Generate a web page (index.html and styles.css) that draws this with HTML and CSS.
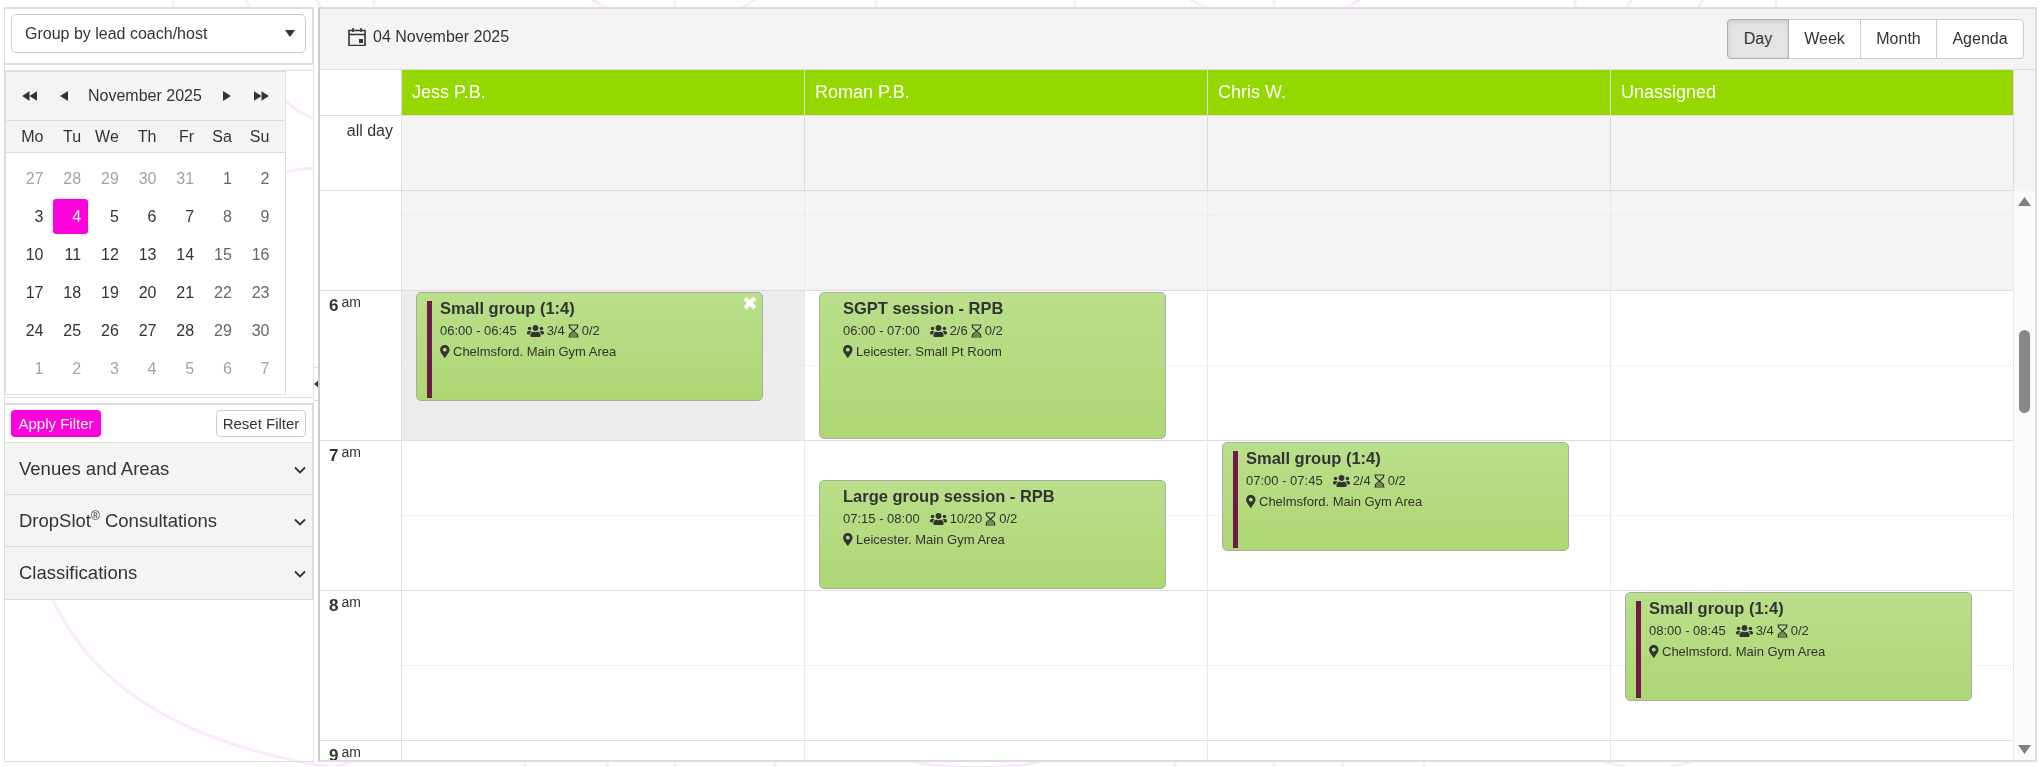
FILE: index.html
```html
<!doctype html>
<html lang="en">

<head>
  <meta charset="utf-8">
  <meta name="viewport" content="width=device-width, initial-scale=1">
  <link rel="stylesheet" href="styles.css">
  <title>Schedule</title>
</head>

<body>
  <!-- faint background pattern, only seen through the gaps -->
  <svg class="pattern" viewBox="0 0 2043 767" aria-hidden="true">
    <path d="M173 0V8M374 0V8M675 0V8M876 0V8M1075 0V8M1274 0V8M1575 0V8M1776 0V8" />
    <path d="M246 0L250 8M316 0L322 8M592 0L608 8M755 0L742 8M1190 0L1208 8M1360 0L1344 8M1632 0L1626 8M1703 0L1698 8" />
    <path d="M525 760V767M675 760V767M775 760V767M1175 760V767M1274 760V767M1424 760V767M606 760L608 767M1344 760L1342 767" />
    <path d="M53 600C95 690 190 745 330 767M335 767L352 761M912 761C950 770 1005 770 1042 761M1603 761L1625 767M1694 761L1670 767" />
    <path d="M285 100C295 110 303 115 313 118M285 172C295 170 303 169 313 168" />
  </svg>

  <svg class="sprites" aria-hidden="true">
    <symbol id="i-users" viewBox="0 0 640 512">
      <path d="M96 224c35.300 0 64-28.700 64-64s-28.700-64-64-64-64 28.700-64 64 28.700 64 64 64zm448 0c35.300 0 64-28.700 64-64s-28.700-64-64-64-64 28.700-64 64 28.700 64 64 64zm32 32h-64c-17.600 0-33.500 7.100-45.100 18.600 40.300 22.100 68.900 62 75.100 109.400h66c17.700 0 32-14.300 32-32v-32c0-35.300-28.700-64-64-64zm-256 0c61.900 0 112-50.100 112-112S381.900 32 320 32 208 82.100 208 144s50.100 112 112 112zm76.800 32h-8.300c-20.800 10-43.900 16-68.500 16s-47.600-6-68.500-16h-8.300C179.600 288 128 339.600 128 403.200V432c0 26.500 21.500 48 48 48h288c26.500 0 48-21.500 48-48v-28.800c0-63.600-51.600-115.200-115.200-115.200zm-223.700-13.400C161.500 263.100 145.600 256 128 256H64c-35.300 0-64 28.700-64 64v32c0 17.700 14.300 32 32 32h65.900c6.300-47.400 34.900-87.300 75.200-109.400z" />
    </symbol>
    <symbol id="i-pin" viewBox="0 0 384 512">
      <path d="M172.268 501.670C26.970 291.031 0 262.774 0 184 0 82.381 82.381 0 184 0s184 82.381 184 184c0 78.774-26.970 107.031-172.268 317.670-8.786 12.690-28.678 12.688-37.464 0zM184 260c41.974 0 76-34.026 76-76s-34.026-76-76-76-76 34.026-76 76 34.026 76 76 76z" />
    </symbol>
    <symbol id="i-hourglass" viewBox="0 0 11 14">
      <path d="M.5 1h10M.5 13h10M1.500 1v2.500L5.500 7l4-3.500V1M1.500 13v-2.500L5.500 7l4 3.500V13" fill="none" stroke="currentColor" stroke-width="1.200" />
      <path d="M2 12.500V10.800L5.500 7.800l3.500 3v1.700z" fill="#6f8a55" />
    </symbol>
    <symbol id="i-chevron" viewBox="0 0 12 8">
      <path d="M1 1.500l5 5 5-5" fill="none" stroke="currentColor" stroke-width="1.800" />
    </symbol>
  </svg>

  <div class="app">
    <aside class="sidebar">
      <div class="panel group-panel">
        <div class="select">
          <span>Group by lead coach/host</span>
          <svg class="caret" viewBox="0 0 10 7"><path d="M0 0h10L5 7z" /></svg>
        </div>
      </div>

      <div class="panel cal-panel">
        <div class="cal">
          <div class="cal-head">
            <svg class="nav nav-double" viewBox="0 0 16 10"><path d="M8 0v10L0 5zM16 0v10L8 5z" /></svg>
            <svg class="nav nav-single" viewBox="0 0 8 10"><path d="M8 0v10L0 5z" /></svg>
            <span class="cal-title">November 2025</span>
            <svg class="nav nav-single" viewBox="0 0 8 10"><path d="M0 0v10l8-5z" /></svg>
            <svg class="nav nav-double" viewBox="0 0 16 10"><path d="M0 0v10l8-5zM8 0v10l8-5z" /></svg>
          </div>
          <div class="cal-grid cal-weekdays">
            <span>Mo</span><span>Tu</span><span>We</span><span>Th</span><span>Fr</span><span>Sa</span><span>Su</span>
          </div>
          <div class="cal-grid cal-days">
            <span class="off">27</span><span class="off">28</span><span class="off">29</span><span class="off">30</span><span class="off">31</span><span class="we">1</span><span class="we">2</span>
            <span>3</span><span class="sel">4</span><span>5</span><span>6</span><span>7</span><span class="we">8</span><span class="we">9</span>
            <span>10</span><span>11</span><span>12</span><span>13</span><span>14</span><span class="we">15</span><span class="we">16</span>
            <span>17</span><span>18</span><span>19</span><span>20</span><span>21</span><span class="we">22</span><span class="we">23</span>
            <span>24</span><span>25</span><span>26</span><span>27</span><span>28</span><span class="we">29</span><span class="we">30</span>
            <span class="off">1</span><span class="off">2</span><span class="off">3</span><span class="off">4</span><span class="off">5</span><span class="off">6</span><span class="off">7</span>
          </div>
        </div>
      </div>

      <div class="panel filter-panel">
        <div class="filter-actions">
          <button class="btn-apply">Apply Filter</button>
          <button class="btn-reset">Reset Filter</button>
        </div>
        <div class="acc-row">
          <span>Venues and Areas</span>
          <svg class="chevron"><use href="#i-chevron" /></svg>
        </div>
        <div class="acc-row">
          <span>DropSlot<sup>®</sup> Consultations</span>
          <svg class="chevron"><use href="#i-chevron" /></svg>
        </div>
        <div class="acc-row">
          <span>Classifications</span>
          <svg class="chevron"><use href="#i-chevron" /></svg>
        </div>
      </div>
    </aside>

    <div class="splitter">
      <div class="splitter-toggle"><svg viewBox="0 0 6 10"><path d="M6 0v10L0 5z" /></svg></div>
    </div>

    <main class="sched">
      <div class="toolbar">
        <div class="toolbar-date">
          <svg class="date-icon" viewBox="0 0 18 19">
            <path d="M1 3.500h16v15H1zM1 7.500h16M5 1v4M13 1v4" fill="none" stroke="#333" stroke-width="1.600" />
            <path d="M11 12h4v4h-4z" fill="#333" />
          </svg>
          <span>04 November 2025</span>
        </div>
        <div class="views">
          <button class="active">Day</button><button>Week</button><button>Month</button><button>Agenda</button>
        </div>
      </div>

      <div class="head-row">
        <div class="axis-cell"></div>
        <div class="head-cell">Jess P.B.</div>
        <div class="head-cell">Roman P.B.</div>
        <div class="head-cell">Chris W.</div>
        <div class="head-cell">Unassigned</div>
      </div>

      <div class="allday-row">
        <div class="axis-cell">all day</div>
        <div class="allday-cell"></div>
        <div class="allday-cell"></div>
        <div class="allday-cell"></div>
        <div class="allday-cell"></div>
      </div>

      <div class="body">
        <div class="axis">
          <div class="hour hour-early"></div>
          <div class="hour"><b>6</b><span>am</span></div>
          <div class="hour"><b>7</b><span>am</span></div>
          <div class="hour"><b>8</b><span>am</span></div>
          <div class="hour"><b>9</b><span>am</span></div>
        </div>

        <div class="col">
          <div class="slot slot-first closed"></div><div class="slot slot-end closed"></div>
          <div class="slot now"></div><div class="slot slot-end now"></div>
          <div class="slot"></div><div class="slot slot-end"></div>
          <div class="slot"></div><div class="slot slot-end"></div>
          <div class="event marked" style="top: 101px; height: 109px">
            <span class="event-close">✖</span>
            <div class="event-title">Small group (1:4)</div>
            <div class="event-line">06:00 - 06:45 <svg class="ic-users"><use href="#i-users" /></svg> 3/4 <svg class="ic-glass"><use href="#i-hourglass" /></svg> 0/2</div>
            <div class="event-line"><svg class="ic-pin"><use href="#i-pin" /></svg> Chelmsford. Main Gym Area</div>
          </div>
        </div>

        <div class="col">
          <div class="slot slot-first closed"></div><div class="slot slot-end closed"></div>
          <div class="slot"></div><div class="slot slot-end"></div>
          <div class="slot"></div><div class="slot slot-end"></div>
          <div class="slot"></div><div class="slot slot-end"></div>
          <div class="event" style="top: 101px; height: 147px">
            <div class="event-title">SGPT session - RPB</div>
            <div class="event-line">06:00 - 07:00 <svg class="ic-users"><use href="#i-users" /></svg> 2/6 <svg class="ic-glass"><use href="#i-hourglass" /></svg> 0/2</div>
            <div class="event-line"><svg class="ic-pin"><use href="#i-pin" /></svg> Leicester. Small Pt Room</div>
          </div>
          <div class="event" style="top: 289px; height: 109px">
            <div class="event-title">Large group session - RPB</div>
            <div class="event-line">07:15 - 08:00 <svg class="ic-users"><use href="#i-users" /></svg> 10/20 <svg class="ic-glass"><use href="#i-hourglass" /></svg> 0/2</div>
            <div class="event-line"><svg class="ic-pin"><use href="#i-pin" /></svg> Leicester. Main Gym Area</div>
          </div>
        </div>

        <div class="col">
          <div class="slot slot-first closed"></div><div class="slot slot-end closed"></div>
          <div class="slot"></div><div class="slot slot-end"></div>
          <div class="slot"></div><div class="slot slot-end"></div>
          <div class="slot"></div><div class="slot slot-end"></div>
          <div class="event marked" style="top: 251px; height: 109px">
            <div class="event-title">Small group (1:4)</div>
            <div class="event-line">07:00 - 07:45 <svg class="ic-users"><use href="#i-users" /></svg> 2/4 <svg class="ic-glass"><use href="#i-hourglass" /></svg> 0/2</div>
            <div class="event-line"><svg class="ic-pin"><use href="#i-pin" /></svg> Chelmsford. Main Gym Area</div>
          </div>
        </div>

        <div class="col">
          <div class="slot slot-first closed"></div><div class="slot slot-end closed"></div>
          <div class="slot"></div><div class="slot slot-end"></div>
          <div class="slot"></div><div class="slot slot-end"></div>
          <div class="slot"></div><div class="slot slot-end"></div>
          <div class="event marked" style="top: 401px; height: 109px">
            <div class="event-title">Small group (1:4)</div>
            <div class="event-line">08:00 - 08:45 <svg class="ic-users"><use href="#i-users" /></svg> 3/4 <svg class="ic-glass"><use href="#i-hourglass" /></svg> 0/2</div>
            <div class="event-line"><svg class="ic-pin"><use href="#i-pin" /></svg> Chelmsford. Main Gym Area</div>
          </div>
        </div>

        <div class="scrollbar">
          <svg class="sb-arrow" viewBox="0 0 13 9"><path d="M6.500 0L13 9H0z" /></svg>
          <div class="sb-thumb"></div>
          <svg class="sb-arrow sb-arrow-down" viewBox="0 0 13 9"><path d="M0 0h13L6.500 9z" /></svg>
        </div>
      </div>
    </main>
  </div>
</body>

</html>
```

FILE: styles.css
```css
html,
body {
  height: 100%;
}

body {
  margin: 0;
  overflow: hidden;
  background: #fff;
  color: #333;
  font-family: "Liberation Sans", Arial, sans-serif;
  font-size: 16px;
}

.pattern {
  position: fixed;
  top: 0;
  left: 0;
  width: 2043px;
  height: 767px;
  z-index: -1;
  fill: none;
  stroke: #fbe9fd;
  stroke-width: 3;
}

.sprites {
  display: none;
}

button {
  font-family: inherit;
  color: inherit;
  cursor: pointer;
}

.app {
  display: flex;
  height: 755px;
  margin: 7px 0 0 4px;
  width: 2033px;
}

/* left column */
.sidebar {
  width: 310px;
  flex: none;
  box-sizing: border-box;
  border: 1px solid #ddd;
  border-top-width: 2px;
}

.panel {
  border-right: 1px solid #ddd;
}

.group-panel {
  height: 56px;
  box-sizing: border-box;
  padding: 5px 6px 0;
  border-bottom: 2px solid #ddd;
}

.select {
  display: flex;
  align-items: center;
  justify-content: space-between;
  height: 39px;
  box-sizing: border-box;
  padding: 0 10px 0 13px;
  border: 1px solid #ccc;
  border-radius: 5px;
  background: #fff;
}

.caret {
  width: 10px;
  height: 7px;
  fill: #333;
}

.cal-panel {
  margin-top: 5px;
  height: 328px;
  box-sizing: border-box;
  border-top: 1px solid #ddd;
  border-right: none;
  border-bottom: 1px solid #ddd;
}

.cal {
  width: 281px;
  height: 324px;
  box-sizing: border-box;
  border: 1px solid #ddd;
  background: #fff;
}

.cal-head {
  display: flex;
  align-items: center;
  height: 48px;
  padding-left: 16px;
  background: #f4f4f4;
  border-bottom: 1px solid #ddd;
}

.nav {
  height: 10px;
  fill: #333;
  flex: none;
}

.nav-double {
  width: 15px;
}

.nav-single {
  width: 8px;
  margin-left: 23px;
}

.nav-single + .nav-double {
  margin-left: 23px;
}

.cal-title {
  width: 115px;
  margin: 0 20px;
  white-space: nowrap;
}

.cal-title + .nav-single {
  margin-left: 0;
}

.cal-grid {
  display: grid;
  grid-template-columns: repeat(7, 35px);
  column-gap: 2.67px;
  padding-left: 9px;
}

.cal-grid span {
  height: 35px;
  line-height: 35px;
  padding-right: 6.5px;
  text-align: right;
  border-radius: 3px;
}

.cal-weekdays {
  height: 31px;
  background: #f4f4f4;
  border-bottom: 1px solid #ddd;
}

.cal-weekdays span {
  height: 31px;
  line-height: 31px;
}

.cal-days {
  padding-top: 8px;
  row-gap: 3px;
}

.off {
  color: #a3a3a3;
}

.we {
  color: #666;
}

.cal-days .sel {
  background: #ff00dd;
  color: #fff;
}

.filter-panel {
  margin-top: 5px;
  height: 197px;
  box-sizing: border-box;
  border-top: 2px solid #ddd;
  border-bottom: 1px solid #ddd;
}

.filter-actions {
  display: flex;
  justify-content: space-between;
  height: 38px;
  box-sizing: border-box;
  padding: 5px 6px 0;
  background: #fff;
  border-bottom: 1px solid #ddd;
}

.filter-actions button {
  width: 90px;
  height: 27px;
  padding: 0;
  font-size: 15px;
  border-radius: 4px;
}

.btn-apply {
  background: #ff00dd;
  border: none;
  color: #fff;
}

.btn-reset {
  background: #fff;
  border: 1px solid #ccc;
}

.acc-row {
  display: flex;
  align-items: center;
  justify-content: space-between;
  height: 52px;
  box-sizing: border-box;
  padding: 0 6px 0 14px;
  background: #f4f4f4;
  border-bottom: 1px solid #ddd;
  font-size: 18.5px;
}

.acc-row:last-child {
  border-bottom: none;
}

.acc-row sup {
  font-size: 12px;
  line-height: 0;
}

.chevron {
  width: 12px;
  height: 8px;
  margin-top: 2px;
  color: #333;
}

/* drag handle between the columns */
.splitter {
  width: 4px;
  flex: none;
  padding-top: 360px;
}

.splitter-toggle {
  display: flex;
  align-items: center;
  height: 32px;
  border-top: 1px solid #ddd;
  border-bottom: 1px solid #ddd;
}

.splitter-toggle svg {
  width: 6px;
  height: 10px;
  flex: none;
  fill: #333;
}

/* scheduler */
.sched {
  flex: 1;
  display: flex;
  flex-direction: column;
  box-sizing: border-box;
  height: 755px;
  border: 2px solid #ddd;
  border-left-color: #ccc;
  background: #f4f4f4;
}

.toolbar {
  display: flex;
  align-items: center;
  justify-content: space-between;
  flex: none;
  height: 61px;
  box-sizing: border-box;
  padding: 0 11px 0 28px;
  border-bottom: 1px solid #ddd;
}

.toolbar-date {
  display: flex;
  align-items: center;
  gap: 7px;
  margin-bottom: 5px;
}

.date-icon {
  width: 18px;
  height: 19px;
}

.views {
  display: flex;
}

.views button {
  height: 40px;
  padding: 0;
  margin-left: -1px;
  background: #fff;
  border: 1px solid #ccc;
  font-size: 16px;
}

.views button:nth-child(1) {
  width: 62px;
  border-radius: 4px 0 0 4px;
}

.views button:nth-child(2) {
  width: 73px;
}

.views button:nth-child(3) {
  width: 77px;
}

.views button:nth-child(4) {
  width: 88px;
  border-radius: 0 4px 4px 0;
}

.views .active {
  position: relative;
  background: #e4e4e4;
  border-color: #adadad;
  box-shadow: inset 0 2px 4px rgba(0, 0, 0, 0.12);
}

.head-row,
.allday-row {
  display: flex;
  flex: none;
}

.head-row {
  height: 46px;
}

.allday-row {
  height: 75px;
}

.axis-cell {
  width: 81px;
  flex: none;
  background: #fff;
  border-right: 1px solid #ddd;
  border-bottom: 1px solid #ddd;
}

.allday-row .axis-cell {
  padding-top: 5px;
  height: 69px;
  width: 73px;
  padding-right: 8px;
  text-align: right;
  line-height: 20px;
}

.head-cell {
  width: 403px;
  flex: none;
  box-sizing: border-box;
  padding: 0 0 0 10px;
  line-height: 45px;
  color: #fff;
  font-size: 18px;
  background: #95d800;
  border-right: 1px solid #ddd;
  border-bottom: 1px solid #ddd;
}

.allday-cell {
  width: 403px;
  flex: none;
  box-sizing: border-box;
  border-right: 1px solid #ddd;
  border-bottom: 1px solid #ddd;
}

.body {
  flex: 1;
  min-height: 0;
  display: flex;
  overflow: hidden;
  background: #fff;
}

.axis {
  width: 81px;
  flex: none;
  border-right: 1px solid #ddd;
}

.hour {
  padding: 5px 0 0 9px;
  height: 144px;
  border-bottom: 1px solid #ddd;
  line-height: 20px;
}

.hour-early {
  height: 94px;
}

.hour b {
  font-size: 17px;
}

.hour span {
  margin-left: 3px;
  font-size: 14px;
  position: relative;
  top: -4px;
}

.col {
  position: relative;
  width: 402px;
  flex: none;
  border-right: 1px solid #e8e8e8;
}

.slot {
  height: 74px;
  border-bottom: 1px dotted #eaeaea;
}

.slot-first {
  height: 24px;
}

.slot-end {
  border-bottom: 1px solid #ddd;
}

.closed {
  background: #f4f4f4;
}

.now {
  background: #ececec;
}

.event {
  position: absolute;
  left: 14px;
  width: 347px;
  box-sizing: border-box;
  padding: 3px 0 0 23px;
  border: 1px solid #aaa;
  border-radius: 5px;
  background: linear-gradient(#b9df8a, #aed774);
}

.marked::before {
  content: "";
  position: absolute;
  left: 10px;
  top: 8px;
  bottom: 2px;
  width: 5px;
  background: #6f1a48;
}

.event-title {
  font-size: 16.5px;
  font-weight: bold;
  line-height: 25px;
}

.event-line {
  display: flex;
  align-items: center;
  gap: 3px;
  font-size: 13px;
  line-height: 20.5px;
  white-space: nowrap;
}

.event-close {
  position: absolute;
  right: 4px;
  top: -1px;
  color: #fff;
  font-size: 19px;
  line-height: 22px;
  font-family: "DejaVu Sans", sans-serif;
}

.ic-users {
  width: 17px;
  height: 14px;
  margin-left: 7px;
  fill: #333;
}

.ic-glass {
  width: 11px;
  height: 14px;
  color: #333;
}

.ic-pin {
  width: 10px;
  height: 13px;
  fill: #333;
}

.scrollbar {
  display: flex;
  flex-direction: column;
  align-items: center;
  flex: 1;
  background: #fafafa;
  padding-top: 6px;
}

.sb-arrow {
  width: 13px;
  height: 9px;
  flex: none;
  fill: #808080;
}

.sb-thumb {
  width: 11px;
  height: 83px;
  margin-top: 124px;
  border-radius: 6px;
  background: #888;
  flex: none;
}

.sb-arrow-down {
  margin-top: 332px;
}
```
